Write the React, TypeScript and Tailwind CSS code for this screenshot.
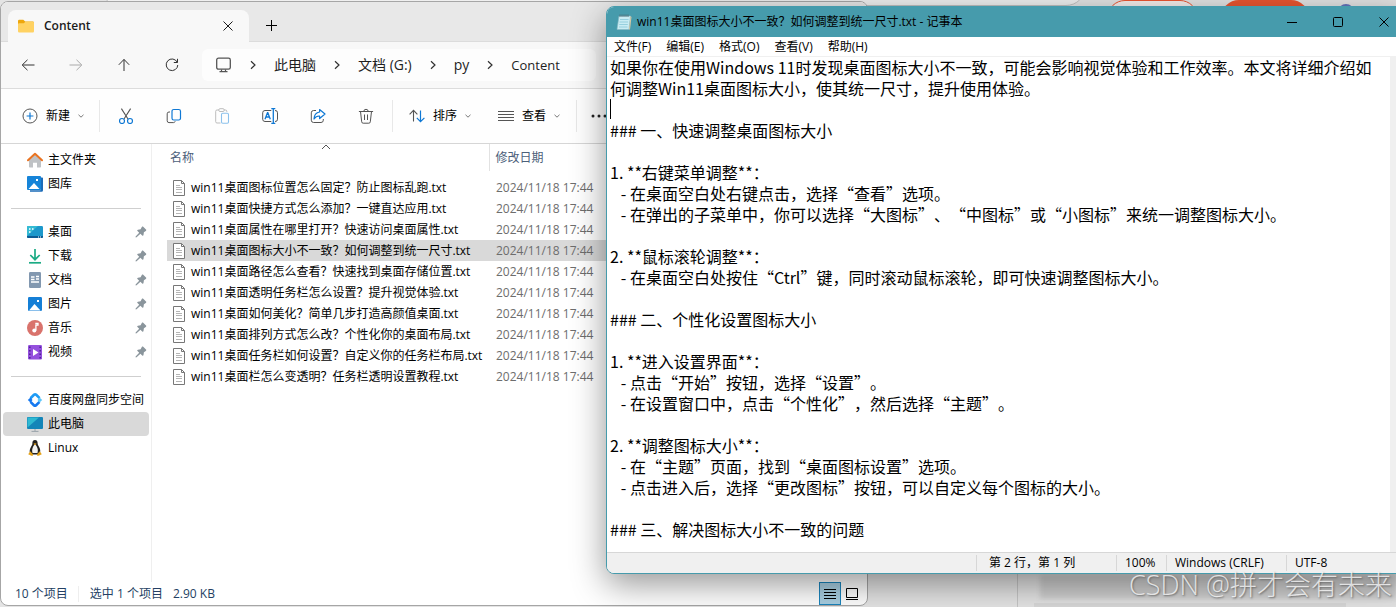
import type { ReactNode } from 'react'
import clsx from 'clsx'

const files = [
  'win11桌面图标位置怎么固定？防止图标乱跑.txt',
  'win11桌面快捷方式怎么添加？一键直达应用.txt',
  'win11桌面属性在哪里打开？快速访问桌面属性.txt',
  'win11桌面图标大小不一致？如何调整到统一尺寸.txt',
  'win11桌面路径怎么查看？快速找到桌面存储位置.txt',
  'win11桌面透明任务栏怎么设置？提升视觉体验.txt',
  'win11桌面如何美化？简单几步打造高颜值桌面.txt',
  'win11桌面排列方式怎么改？个性化你的桌面布局.txt',
  'win11桌面任务栏如何设置？自定义你的任务栏布局.txt',
  'win11桌面栏怎么变透明？任务栏透明设置教程.txt',
]

const selectedFile = 3

const noteText = `如果你在使用Windows 11时发现桌面图标大小不一致，可能会影响视觉体验和工作效率。本文将详细介绍如何调整Win11桌面图标大小，使其统一尺寸，提升使用体验。

### 一、快速调整桌面图标大小

1. **右键菜单调整**：
   - 在桌面空白处右键点击，选择“查看”选项。
   - 在弹出的子菜单中，你可以选择“大图标”、“中图标”或“小图标”来统一调整图标大小。

2. **鼠标滚轮调整**：
   - 在桌面空白处按住“Ctrl”键，同时滚动鼠标滚轮，即可快速调整图标大小。

### 二、个性化设置图标大小

1. **进入设置界面**：
   - 点击“开始”按钮，选择“设置”。
   - 在设置窗口中，点击“个性化”，然后选择“主题”。

2. **调整图标大小**：
   - 在“主题”页面，找到“桌面图标设置”选项。
   - 点击进入后，选择“更改图标”按钮，可以自定义每个图标的大小。

### 三、解决图标大小不一致的问题`

interface SvgProps {
  children: ReactNode
  size?: number
  className?: string
}

function Svg({ children, size = 16, className }: SvgProps) {
  return (
    <svg
      width={size}
      height={size}
      viewBox={`0 0 ${size} ${size}`}
      fill="none"
      stroke="currentColor"
      className={clsx('shrink-0', className)}
      aria-hidden="true"
    >
      {children}
    </svg>
  )
}

const BackIcon = () => <Svg><path d="M14.5 8H2.5M7.5 2.8 2.2 8l5.3 5.2" /></Svg>
const ForwardIcon = () => <Svg><path d="M1.5 8h12M8.5 2.8 13.8 8l-5.3 5.2" /></Svg>
const UpIcon = () => <Svg><path d="M8 14V2.5M2.8 7.8 8 2.4l5.2 5.4" /></Svg>
const RefreshIcon = () => <Svg><path d="M13.2 5.2A5.8 5.8 0 1 0 13.8 8M13.5 1.8v3.7H9.8" /></Svg>
const CloseIcon = ({ size = 10 }: { size?: number }) => (
  <svg width={size} height={size} viewBox="0 0 10 10" stroke="currentColor" aria-hidden="true"><path d="m.5.5 9 9M9.5.5l-9 9" /></svg>
)
const PlusIcon = () => <Svg size={11}><path d="M5.5 0v11M0 5.5h11" /></Svg>
const ChevronRight = () => <Svg size={10} className="text-[#333]"><path d="m3 1.2 4 3.8-4 3.8" strokeWidth="1.2" /></Svg>
const ChevronDown = () => <Svg size={6} className="text-[#777]"><path d="m.5 1.8 2.5 2.4 2.5-2.4" /></Svg>

const MonitorIcon = () => (
  <Svg className="text-[#555]">
    <rect x=".7" y="1.2" width="13.6" height="11" rx="1.8" strokeWidth="1.3" />
    <path d="M5.5 12.5v2M9.500 12.5v2M3.500 14.6h8" strokeWidth="1.2" />
  </Svg>
)

const NewIcon = () => (
  <Svg className="text-[#555]">
    <circle cx="8" cy="8" r="7" />
    <path d="M8 4.6v6.8M4.6 8h6.8" stroke="#0f78d4" strokeWidth="1.2" />
  </Svg>
)

const CutIcon = () => (
  <Svg className="text-[#555]">
    <path d="M3.4.6 10 11M12.6.6 6 11" strokeWidth="1.1" />
    <circle cx="4" cy="13" r="2.5" stroke="#0f78d4" strokeWidth="1.2" />
    <circle cx="12" cy="13" r="2.5" stroke="#0f78d4" strokeWidth="1.2" />
  </Svg>
)

const CopyIcon = () => (
  <Svg className="text-[#555]">
    <path d="M4 4H3a1.8 1.8 0 0 0-1.8 1.8v7A1.8 1.8 0 0 0 3 14.6h4.5a1.8 1.8 0 0 0 1.7-1.3" />
    <rect x="6" y="1.5" width="8.5" height="10.5" rx="1.8" stroke="#0f78d4" strokeWidth="1.2" />
  </Svg>
)

const PasteIcon = () => (
  <Svg className="text-[#bdbdbd]">
    <path d="M5 2H3a1.3 1.3 0 0 0-1.3 1.3v10.4A1.3 1.3 0 0 0 3 15h3.5M10 2h1.5a1.3 1.3 0 0 1 1.3 1.3V4" />
    <rect x="4.8" y=".7" width="5.4" height="2.8" rx="1.2" />
    <rect x="7.5" y="5.3" width="7" height="10" rx="1.2" stroke="#8cc1ec" strokeWidth="1.1" />
  </Svg>
)

const RenameIcon = () => (
  <Svg className="text-[#555]">
    <path d="M9.3 2.500H3A2.3 2.3 0 0 0 .7 4.8v6.4A2.3 2.3 0 0 0 3 13.5h6.3M13 2.5a2.3 2.3 0 0 1 2.5 2.3v6.4a2.3 2.3 0 0 1-2.5 2.3" />
    <path d="M9.3.6h4M9.3 15.4h4M11.3.6v14.8M3 11.3l2.5-6.6h.3l2.5 6.6M4 9h3.4" stroke="#0f78d4" strokeWidth="1.3" />
  </Svg>
)

const ShareIcon = () => (
  <Svg className="text-[#555]">
    <path d="M6 2.5H3.6A2.3 2.3 0 0 0 1.3 4.8v7.4a2.3 2.3 0 0 0 2.3 2.3h7.4a2.3 2.3 0 0 0 2.3-2.3V11" />
    <path d="M9.6 1.5 15 6l-5.4 4.500V8C7 7.8 5.4 8.8 4 11c.2-3.8 2-6.5 5.6-7z" stroke="#0f78d4" strokeWidth="1.2" strokeLinejoin="round" />
  </Svg>
)

const TrashIcon = () => (
  <Svg className="text-[#555]">
    <path d="M.9 3.5h14.200M5.800 3.500a2.200 2.200 0 0 1 4.400 0M2.500 3.500l1.200 10.300a1.500 1.500 0 0 0 1.500 1.400h5.600a1.500 1.500 0 0 0 1.500-1.400L13.500 3.500M6.500 6.500v5.500M9.500 6.500v5.500" />
  </Svg>
)

const SortIcon = () => (
  <Svg>
    <path d="M4.500 13.500v-11M.6 6.300l3.900-4 3.900 4" stroke="#555" strokeWidth="1.1" />
    <path d="M11.500 2.500v11M7.800 9.800l3.700 3.900 3.900-3.900" stroke="#0f78d4" strokeWidth="1.2" />
  </Svg>
)

const LinesIcon = ({ className }: { className?: string }) => (
  <Svg className={className}><path d="M0 3.5h16M0 6.5h16M0 9.5h16M0 12.5h16" /></Svg>
)

const PinIcon = () => (
  <svg width="12" height="12" viewBox="0 0 12 12" fill="#8a959c" className="ml-auto mr-3 shrink-0" aria-hidden="true">
    <path d="M6.800 1c.5-.6 1-.600 1.400-.200l2.800 2.800c.400.400.400.900-.200 1.300L8.900 6.200l-.4 2.900c-.1.800-.8 1-1.300.500L5.400 7.800 1.600 11.300l-.9.100-.1-.8 3.600-3.800-1.700-1.700c-.5-.5-.3-1.200.5-1.300l2.600-.500z" />
  </svg>
)

const FolderIcon = () => (
  <svg width="16" height="14" viewBox="0 0 16 14" className="shrink-0" aria-hidden="true">
    <path d="M0 2A1.300 1.300 0 0 1 1.300.7h4L7.200 2.500h7.500A1.300 1.300 0 0 1 16 3.800V8H0z" fill="#eea70c" />
    <path d="M0 5.200a1 1 0 0 1 1-1h4.800l1.600-1.500h7.500A1.100 1.100 0 0 1 16 3.800v8.400a1.200 1.200 0 0 1-1.200 1.200H1.200A1.200 1.200 0 0 1 0 12.200z" fill="#ffd262" />
  </svg>
)

const HomeIcon = () => (
  <Svg>
    <path d="M2 7.500 8 2l6 5.500v7.300a.8.8 0 0 1-.8.8H10v-4.800H6v4.800H2.800a.8.8 0 0 1-.8-.8z" fill="#bfc2c5" stroke="none" />
    <path d="M1 8.200 8 1.700l7 6.500" stroke="#ea7422" strokeWidth="2" strokeLinecap="round" strokeLinejoin="round" />
  </Svg>
)

const GalleryIcon = () => (
  <Svg>
    <path d="M14 1.500h1.200a.8.8 0 0 1 .8.8v12a1.500 1.500 0 0 1-1.500 1.500H3v-1.500h10.500z" fill="#1c6cb8" stroke="none" />
    <rect x="0" y="0" width="14" height="14" rx="1" fill="#1684d8" stroke="none" />
    <path d="M1.500 13 7 7l5.500 6z" fill="#fff" stroke="none" />
    <rect x="9" y="3" width="2" height="2" fill="#fff" stroke="none" />
  </Svg>
)

const DesktopIcon = () => (
  <Svg>
    <rect x="0" y="2" width="16" height="12" rx="1.2" fill="#1c98cb" stroke="none" />
    <path d="M1.200 2H11L0 12V3.200A1.200 1.200 0 0 1 1.200 2z" fill="#35bbd3" stroke="none" />
    <path d="M2 5h1.500M2 8h1.500M5 5h1.500" stroke="#fff" strokeWidth="1.5" />
    <path d="M0 12h16v.8a1.200 1.200 0 0 1-1.200 1.200H1.200A1.200 1.200 0 0 1 0 12.800z" fill="#0b5c94" stroke="none" />
    <path d="M11 13h1M13 13h1" stroke="#fff" />
  </Svg>
)

const DownloadIcon = () => (
  <Svg className="text-[#1bab84]">
    <path d="M8 1v10.500M3.300 7l4.700 4.700L12.700 7" strokeWidth="1.7" />
    <path d="M2 14.800h12" strokeWidth="1.7" />
  </Svg>
)

const DocumentsIcon = () => (
  <Svg>
    <rect x="2" y="0" width="12" height="16" rx="1.2" fill="#8298b0" stroke="none" />
    <path d="M4 5h3.500M9 4.500h3M4 7.500h3.500M9 7h3M4 10h8" stroke="#fff" strokeWidth="1.4" />
  </Svg>
)

const PicturesIcon = () => (
  <Svg>
    <rect x="1" y="1" width="14" height="14" rx="1.2" fill="#157fd6" stroke="none" />
    <path d="M2 14.500 7.500 8l6 6.500z" fill="#fff" stroke="none" />
    <rect x="10" y="4" width="2" height="2" fill="#fff" stroke="none" />
  </Svg>
)

const MusicIcon = () => (
  <Svg>
    <circle cx="8" cy="8" r="8" fill="#d9736c" stroke="none" />
    <path d="M8.300 3.500h2.700v1.600H8.900v5.500" stroke="#fff" strokeWidth="1.3" />
    <circle cx="7.300" cy="10.600" r="2" fill="#fff" stroke="none" />
  </Svg>
)

const VideoIcon = () => (
  <Svg>
    <rect x="1" y="1" width="14" height="14.500" rx="1.2" fill="#9450dd" stroke="none" />
    <path d="M2.800 2.500v12M13.200 2.500v12" stroke="#4d2191" strokeWidth="1.5" strokeDasharray="1.5 2" />
    <path d="m6 5 5.500 3.500L6 12z" fill="#fff" stroke="none" />
  </Svg>
)

// Two interlocking ribbons around an open diamond.
const BaiduIcon = () => (
  <Svg>
    <path d="M3.500 6.200 7 2.800a1.600 1.600 0 0 1 2.200 0l3.400 3.400" stroke="#1e9bf5" strokeWidth="2.600" />
    <path d="m12.500 9.800-3.400 3.400a1.600 1.600 0 0 1-2.200 0L3.500 9.800" stroke="#1679f0" strokeWidth="2.600" />
    <path d="m.800 8 2.700-2.500 2 2.500-2 2.500z" fill="#1679f0" stroke="none" />
    <path d="m15.200 8-2.700-2.500-2 2.500 2 2.500z" fill="#5cc7fa" stroke="none" />
  </Svg>
)

const ThisPcIcon = () => (
  <Svg>
    <rect x="0" y="1" width="16" height="12" rx="1" fill="#1485b8" stroke="none" />
    <path d="M1 1.500h11L.500 11.500V2z" fill="#2fb9d1" stroke="none" />
    <path d="M8 13v2M4.500 15.400h7" stroke="#9aa4ab" />
  </Svg>
)

const LinuxIcon = () => (
  <Svg>
    <path d="M8 0c2 0 2.700 1.500 2.600 3.300 0 1.600.9 2.500 1.800 4.200.9 1.800 1 3.300.7 4.800L11 14.500H5l-2.200-2.200c-.3-1.500 0-3 .9-4.800C4.600 5.800 5.400 5 5.400 3.300 5.300 1.500 6 0 8 0z" fill="#23211f" stroke="none" />
    <path d="M8 4.500c1.200.5 1.600 1.500 2.200 3 .7 1.600.9 3 .3 5.500h-5c-.6-2.500-.4-3.900.3-5.500.6-1.500 1-2.500 2.200-3z" fill="#f2f2f0" stroke="none" />
    <path d="M6.500 3.800 8 3.200l1.600.6L8 5.200zM1.200 14.300l2-3L6 14.200c.3 1.200-.4 1.700-1.500 1.600zM14.800 14.300l-2-3-2.800 2.900c-.3 1.200.4 1.700 1.500 1.600z" fill="#e3a21a" stroke="none" />
  </Svg>
)

const TextFileIcon = () => (
  <svg width="12" height="16" viewBox="0 0 12 16" fill="#fff" stroke="#777" className="shrink-0" aria-hidden="true">
    <path d="M.5.5h8l3 3v12H.5z" />
    <path d="M8.5.5v3h3" fill="none" />
    <path d="M3 5.500h4M3 7.500h6M3 9.500h6M3 12.500h6" stroke="#b5b5b5" fill="none" />
  </svg>
)

const NotepadIcon = () => (
  <Svg>
    <path d="M3 2h11.500L13 15.500H1z" fill="#c9ecf3" stroke="#8ab9c5" strokeWidth=".6" />
    <path d="m14.500 2 1 1L14 15.500h-1z" fill="#d9c9a3" stroke="none" />
    <path d="M4 5.500h8.500M3.500 8H12M3.300 10.500h8.500M3 13h8.500" stroke="#7fc3d4" strokeWidth=".7" />
    <path d="M4 .5V3M6 .5V3M8 .5V3M10 .5V3M12 .5V3" stroke="#46606b" strokeWidth=".8" />
  </Svg>
)

interface Place {
  name: string
  icon: ReactNode
  pinned?: boolean
  active?: boolean
}

const placeGroups: Place[][] = [
  [
    { name: '主文件夹', icon: <HomeIcon /> },
    { name: '图库', icon: <GalleryIcon /> },
  ],
  [
    { name: '桌面', icon: <DesktopIcon />, pinned: true },
    { name: '下载', icon: <DownloadIcon />, pinned: true },
    { name: '文档', icon: <DocumentsIcon />, pinned: true },
    { name: '图片', icon: <PicturesIcon />, pinned: true },
    { name: '音乐', icon: <MusicIcon />, pinned: true },
    { name: '视频', icon: <VideoIcon />, pinned: true },
  ],
  [
    { name: '百度网盘同步空间', icon: <BaiduIcon /> },
    { name: '此电脑', icon: <ThisPcIcon />, active: true },
    { name: 'Linux', icon: <LinuxIcon /> },
  ],
]

const tools = [
  { label: '剪切', icon: <CutIcon /> },
  { label: '复制', icon: <CopyIcon /> },
  { label: '粘贴', icon: <PasteIcon />, disabled: true },
  { label: '重命名', icon: <RenameIcon /> },
  { label: '共享', icon: <ShareIcon /> },
  { label: '删除', icon: <TrashIcon /> },
]

function NavButton({ label, disabled, children }: { label: string; disabled?: boolean; children: ReactNode }) {
  return (
    <button aria-label={label} disabled={disabled} className="flex h-8 w-12 items-center justify-center text-[#333] disabled:text-[#aaa]">
      {children}
    </button>
  )
}

function Sidebar() {
  return (
    <nav className="w-[151px] shrink-0 border-r border-[#efefef] pt-1">
      {placeGroups.map((group, i) => (
        <div key={i}>
          {i > 0 && <div className="flex h-6 items-center px-2.5"><div className="h-px w-full bg-[#cfcfcf]" /></div>}
          {group.map(place => (
            <a
              key={place.name}
              href="#"
              className={clsx(
                'ml-0.5 flex h-6 items-center gap-[5px] whitespace-nowrap rounded-sm pl-6',
                place.active && 'mr-0.5 bg-[#d9d9d9]',
                place.pinned && '-mr-2',
              )}
            >
              {place.icon}
              {place.name}
              {place.pinned && <PinIcon />}
            </a>
          ))}
        </div>
      ))}
    </nav>
  )
}

function FileList() {
  return (
    <table className="w-full table-fixed border-collapse text-left">
      <thead className="text-[#4c607a]">
        <tr className="h-[27px]">
          <th className="w-[337px] border-r border-[#e2e2e2] pl-[18px] font-normal">
            <div className="relative">
              名称
              <Svg size={10} className="absolute -top-2 left-[151px] text-[#555]"><path d="m1 7 4-4 4 4" /></Svg>
            </div>
          </th>
          <th className="pl-1.5 font-normal">修改日期</th>
        </tr>
        <tr className="h-1.5"><td colSpan={2} /></tr>
      </thead>
      <tbody>
        {files.map((name, i) => (
          <tr key={name} className="h-[21px]">
            <td className="p-0 pl-[15px]">
              <div className={clsx('flex h-[21px] items-center gap-1.5 whitespace-nowrap pl-1.5', i === selectedFile && 'bg-[#d9d9d9]')}>
                <TextFileIcon />
                {name}
              </div>
            </td>
            <td className={clsx('p-0 pl-[7px] text-[#6d6d6d]', i === selectedFile && 'bg-[#d9d9d9]')}>2024/11/18 17:44</td>
          </tr>
        ))}
      </tbody>
    </table>
  )
}

function Explorer() {
  return (
    <section className="absolute bottom-px left-0 top-px flex w-[868px] flex-col overflow-hidden rounded-lg border border-[#a6a6a6] bg-white">
      <header className="flex shrink-0 items-end border-b border-[#dcdcdc] bg-[#e8e8e8] pl-[7px] pt-[7px]">
        <div className="-mb-px flex h-8 w-[241px] items-center rounded-t-lg bg-[#f8f8f8] pl-2.5 pr-4 font-semibold text-[#1b1b1b]">
          <FolderIcon />
          <span className="ml-2.5 flex-1">Content</span>
          <button aria-label="关闭标签页"><CloseIcon /></button>
        </div>
        <button aria-label="新建标签页" className="flex h-8 w-[45px] items-center justify-center"><PlusIcon /></button>
      </header>

      <div className="flex shrink-0 items-center border-b border-[#dcdcdc] bg-[#f8f8f8] py-[7px] pl-[3px]">
        <NavButton label="后退"><BackIcon /></NavButton>
        <NavButton label="前进" disabled><ForwardIcon /></NavButton>
        <NavButton label="上移"><UpIcon /></NavButton>
        <NavButton label="刷新"><RefreshIcon /></NavButton>
        <div className="ml-1.5 flex h-8 w-[394px] items-center gap-4 rounded-md bg-[#fdfdfd] pl-3.5 text-sm text-[#1f1f1f]">
          <MonitorIcon />
          <ChevronRight />
          <a href="#">此电脑</a>
          <ChevronRight />
          <a href="#">文档 (G:)</a>
          <ChevronRight />
          <a href="#">py</a>
          <ChevronRight />
          <a href="#" className="text-[13px]">Content</a>
        </div>
      </div>

      <div className="flex h-[55px] shrink-0 items-center border-b border-[#d6d6d6] bg-[#fefefe] pl-[21px]">
        <button className="flex items-center gap-2"><NewIcon />新建<ChevronDown /></button>
        <div className="ml-[15px] mr-0.5 h-8 w-px bg-[#e8e8e8]" />
        {tools.map(tool => (
          <NavButton key={tool.label} label={tool.label} disabled={tool.disabled}>{tool.icon}</NavButton>
        ))}
        <div className="ml-0.5 h-8 w-px bg-[#e8e8e8]" />
        <button className="ml-4 flex items-center gap-2"><SortIcon />排序<ChevronDown /></button>
        <button className="ml-[27px] flex items-center gap-2"><LinesIcon className="text-[#555]" />查看<ChevronDown /></button>
        <div className="ml-4 h-8 w-px bg-[#e8e8e8]" />
        <button aria-label="更多" className="ml-3.5">
          <svg width="16" height="4" viewBox="0 0 16 4" fill="#222" aria-hidden="true"><circle cx="2" cy="2" r="1.5" /><circle cx="8" cy="2" r="1.5" /><circle cx="14" cy="2" r="1.5" /></svg>
        </button>
      </div>

      <div className="flex min-h-0 flex-1">
        <Sidebar />
        <main className="min-w-0 flex-1"><FileList /></main>
      </div>

      <footer className="flex h-[23px] shrink-0 items-center pl-3.5 text-[#243f63]">
        <span>10 个项目</span>
        <span className="ml-2.5 border-l border-[#eee] pl-[11px]">选中 1 个项目</span>
        <span className="ml-2.5">2.90 KB</span>
        <div className="ml-auto flex items-center gap-[5px] pr-[9px] text-black">
          <button aria-label="详细信息" className="flex h-[23px] w-[22px] items-center justify-center border border-[#1b85bd] bg-[#a9cfe2]">
            <Svg size={12}><path d="M0 1.5h12M0 4.5h12M0 7.5h12M0 10.5h12" /></Svg>
          </button>
          <button aria-label="大图标">
            <Svg size={12}><path d="M.5.5h11v9H.5zM0 11.5h12" /></Svg>
          </button>
        </div>
      </footer>
    </section>
  )
}

function Notepad() {
  return (
    <section className="absolute -right-3 left-[606px] top-1.5 flex flex-col overflow-hidden rounded-lg border border-[#469bac] bg-white shadow-[0_10px_34px_rgba(0,0,0,0.42)]">
      <header className="flex h-[30px] shrink-0 items-center bg-[#469bac] pl-[9px] text-black">
        <NotepadIcon />
        <h1 className="ml-[5px] flex-1">win11桌面图标大小不一致？如何调整到统一尺寸.txt - 记事本</h1>
        <button aria-label="最小化" className="flex h-full w-[46px] items-center justify-center"><Svg size={10}><path d="M0 5.5h10" /></Svg></button>
        <button aria-label="最大化" className="flex h-full w-[46px] items-center justify-center"><Svg size={10}><rect x=".5" y=".5" width="9" height="9" rx="1" /></Svg></button>
        <button aria-label="关闭" className="flex h-full w-[46px] items-center justify-center"><CloseIcon /></button>
      </header>
      <div className="flex h-5 items-center gap-[15px] border-b border-[#f0f0f0] pl-[7px]">
        <button>文件(F)</button>
        <button>编辑(E)</button>
        <button>格式(O)</button>
        <button>查看(V)</button>
        <button>帮助(H)</button>
      </div>
      <div className="relative flex">
        <textarea
          aria-label="文本编辑器"
          rows={23}
          spellCheck={false}
          defaultValue={noteText}
          className="mb-3 block min-w-0 flex-1 resize-none overflow-hidden border-0 bg-transparent pl-[3px] pr-3 font-['Noto_Sans_CJK_SC','Noto_Sans',sans-serif] text-base leading-[21px] outline-none [text-spacing-trim:space-all]"
        />
        <span className="absolute left-[3px] top-[42px] h-5 w-px bg-black" />
        <div className="w-[17px] shrink-0 bg-[#f0f0f0]" />
      </div>
      <footer className="flex h-[21px] items-center justify-end border-t border-[#d7d7d7] bg-[#f0f0f0]">
        <span className="w-[140px] border-l border-[#d7d7d7] pl-3">第 2 行，第 1 列</span>
        <span className="w-[50px] border-l border-[#d7d7d7] pl-2">100%</span>
        <span className="w-[120px] border-l border-[#d7d7d7] pl-2">Windows (CRLF)</span>
        <span className="w-[121px] border-l border-[#d7d7d7] pl-2">UTF-8</span>
      </footer>
    </section>
  )
}

// Browser page that peeks out around the two windows.
function Backdrop() {
  return (
    <div className="absolute inset-0 bg-[#e4e4e4]" aria-hidden="true">
      <div className="absolute -top-[34px] left-[100px] right-[310px] h-10 rounded-[20px] border border-[#c2c2c2] bg-[#f0f0f0]" />
      <div className="absolute right-[198px] top-0 h-9 w-[91px] rounded-full border border-[#ec5531] bg-[#f4eeec]" />
      <div className="absolute right-[87px] top-0 h-9 w-[88px] rounded-full bg-[#ec5531]" />
      <div className="absolute right-[42px] top-1 size-4 rounded-full bg-[#6374bd]" />
      <div className="absolute bottom-0 right-[378px] h-10 w-px bg-[#c6c6c6]" />
      <div className="absolute bottom-2 right-0 h-6 w-[356px] bg-[#cfcfcf] blur-[2px]" />
      <div className="absolute bottom-0 right-[50px] h-1 w-[312px] bg-[#d8d8d8]" />
    </div>
  )
}

export default function App() {
  return (
    <div lang="zh-CN" className="relative h-screen overflow-hidden font-['Open_Sans','Noto_Sans_CJK_SC',sans-serif] text-xs text-black">
      <Backdrop />
      <Explorer />
      <Notepad />
      <div className="absolute bottom-0.5 right-1 whitespace-nowrap text-[27px] font-light leading-10 text-white/75 [text-shadow:1px_1px_2px_#666]">
        CSDN @拼才会有未来
      </div>
    </div>
  )
}
